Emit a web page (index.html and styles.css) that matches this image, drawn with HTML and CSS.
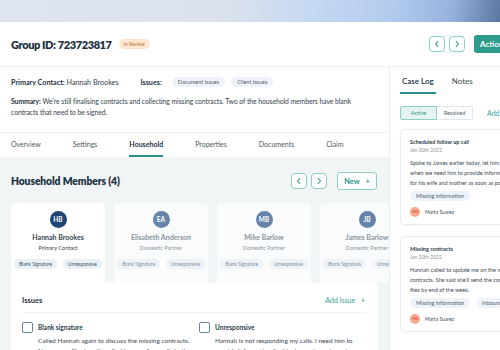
FILE: index.html
```html
<!DOCTYPE html>
<html lang="en">
<head>
  <meta charset="UTF-8">
  <title>Group 723723817 - Household</title>
  <link rel="stylesheet" href="styles.css">
</head>
<body>

  <div class="banner"></div>

  <header class="header">
    <h1>Group ID: 723723817</h1>
    <span class="status">In Review</span>
    <div class="header-actions">
      <button class="icon-btn" aria-label="Previous">
        <svg viewBox="0 0 10 10" width="8" height="8"><path d="M6 2 L3 5 L6 8" fill="none" stroke="currentColor" stroke-width="1.3" stroke-linecap="round" stroke-linejoin="round"/></svg>
      </button>
      <button class="icon-btn" aria-label="Next">
        <svg viewBox="0 0 10 10" width="8" height="8"><path d="M4 2 L7 5 L4 8" fill="none" stroke="currentColor" stroke-width="1.3" stroke-linecap="round" stroke-linejoin="round"/></svg>
      </button>
      <button class="btn-primary">Actions</button>
    </div>
  </header>

  <div class="layout">
    <main class="main">
      <section class="info">
        <div class="info-row">
          <p><strong>Primary Contact:</strong> Hannah Brookes</p>
          <p class="issues-label"><strong>Issues:</strong></p>
          <span class="chip">Document Issues</span>
          <span class="chip">Client Issues</span>
        </div>
        <p class="summary"><strong>Summary:</strong> We're still finalising contracts and collecting missing contracts. Two of the household members have blank contracts that need to be signed.</p>
      </section>

      <nav class="tabs">
        <a href="#">Overview</a>
        <a href="#">Settings</a>
        <a href="#" class="active">Household</a>
        <a href="#">Properties</a>
        <a href="#">Documents</a>
        <a href="#">Claim</a>
      </nav>

      <section class="household">
        <div class="section-head">
          <h2>Household Members (4)</h2>
          <div class="head-actions">
            <button class="icon-btn" aria-label="Previous">
              <svg viewBox="0 0 10 10" width="8" height="8"><path d="M6 2 L3 5 L6 8" fill="none" stroke="currentColor" stroke-width="1.3" stroke-linecap="round" stroke-linejoin="round"/></svg>
            </button>
            <button class="icon-btn" aria-label="Next">
              <svg viewBox="0 0 10 10" width="8" height="8"><path d="M4 2 L7 5 L4 8" fill="none" stroke="currentColor" stroke-width="1.3" stroke-linecap="round" stroke-linejoin="round"/></svg>
            </button>
            <button class="btn-outline">New <span class="plus">+</span></button>
          </div>
        </div>

        <div class="members">
          <div class="member selected">
            <span class="avatar dark">HB</span>
            <p class="member-name">Hannah Brookes</p>
            <p class="member-role">Primary Contact</p>
            <div class="member-tags"><span class="tag">Blank Signature</span><span class="tag">Unresponsive</span></div>
          </div>
          <div class="member">
            <span class="avatar">EA</span>
            <p class="member-name">Elisabeth Anderson</p>
            <p class="member-role">Domestic Partner</p>
            <div class="member-tags"><span class="tag">Blank Signature</span><span class="tag">Unresponsive</span></div>
          </div>
          <div class="member">
            <span class="avatar">MB</span>
            <p class="member-name">Mike Barlow</p>
            <p class="member-role">Domestic Partner</p>
            <div class="member-tags"><span class="tag">Blank Signature</span><span class="tag">Unresponsive</span></div>
          </div>
          <div class="member">
            <span class="avatar">JB</span>
            <p class="member-name">James Barlow</p>
            <p class="member-role">Domestic Partner</p>
            <div class="member-tags"><span class="tag">Blank Signature</span><span class="tag">Unresponsive</span></div>
          </div>
        </div>

        <div class="issues-panel">
          <div class="issues-head">
            <h3>Issues</h3>
            <a href="#" class="link">Add Issue <span class="plus">+</span></a>
          </div>
          <div class="issues-list">
            <div class="issue">
              <span class="checkbox"></span>
              <div>
                <p class="issue-title">Blank signature</p>
                <p class="issue-text">Called Hannah again to discuss the missing contracts. No answer. She hasn't replied to any of my calls in the last week.</p>
              </div>
            </div>
            <div class="issue">
              <span class="checkbox"></span>
              <div>
                <p class="issue-title">Unresponsive</p>
                <p class="issue-text">Hannah is not responding my calls. I need him to provide information for his domestic partners in order to proceed.</p>
              </div>
            </div>
          </div>
        </div>
      </section>
    </main>

    <aside class="side">
      <nav class="side-tabs">
        <a href="#" class="active">Case Log</a>
        <a href="#">Notes</a>
      </nav>
      <div class="side-toolbar">
        <div class="segmented">
          <span class="seg active">Active</span>
          <span class="seg">Resolved</span>
        </div>
        <a href="#" class="link">Add</a>
      </div>

      <div class="log">
        <p class="log-title">Scheduled follow up call</p>
        <p class="log-date">Jan 30th 2022</p>
        <p class="log-text">Spoke to James earlier today, let him know when we need him to provide information for his wife and mother as soon as possible.</p>
        <div class="log-tags"><span class="chip">Missing Information</span></div>
        <div class="log-author"><span class="avatar small">MS</span>Marta Suarez</div>
      </div>

      <div class="log">
        <p class="log-title">Missing contracts</p>
        <p class="log-date">Jan 20th 2022</p>
        <p class="log-text">Hannah called to update me on the missing contracts. She said she'll send the contract files by end of the week.</p>
        <div class="log-tags"><span class="chip">Missing Information</span><span class="chip">Inbound Call</span></div>
        <div class="log-author"><span class="avatar small">MS</span>Marta Suarez</div>
      </div>
    </aside>
  </div>

</body>
</html>
```

FILE: styles.css
```css
body {
  font-family: 'Lato', 'Open Sans', sans-serif;
  margin: 0;
  width: 500px;
  height: 350px;
  overflow: hidden;
  background-color: #fff;
  color: #2f3f4a;
}

p, h1, h2, h3 {
  margin: 0;
}

a {
  text-decoration: none;
  color: inherit;
}

button {
  font-family: inherit;
  cursor: pointer;
}

.banner {
  height: 22px;
  background: linear-gradient(100deg, #dfe5ee 0%, #dbe2ec 45%, #c6d8f1 62%, #b3cbee 78%, #97b2dc 90%, #5a779f 100%);
}

.header {
  display: flex;
  align-items: center;
  height: 44px;
  padding-left: 11px;
  border-bottom: 1px solid #eef2f3;
  white-space: nowrap;
}

.header h1 {
  font-size: 11px;
  font-weight: 800;
  letter-spacing: -0.4px;
  color: #1c3244;
}

.status {
  margin-left: 7px;
  background-color: #fde7d2;
  color: #c0763a;
  font-size: 5px;
  padding: 2px 5px;
  border-radius: 8px;
}

.header-actions {
  margin-left: auto;
  margin-right: -24px;
  display: flex;
  align-items: center;
  gap: 4px;
}

.icon-btn {
  width: 16px;
  height: 16px;
  padding: 0;
  display: flex;
  align-items: center;
  justify-content: center;
  border: 1px solid #8ccfc5;
  border-radius: 4px;
  background-color: #fff;
  color: #2b978a;
}

.btn-primary {
  margin-left: 5px;
  width: 50px;
  height: 18px;
  border: none;
  border-radius: 3px;
  background-color: #2f9b8b;
  color: #fff;
  font-size: 8px;
  font-weight: 700;
  text-align: left;
  padding: 0 0 0 6px;
}

.layout {
  display: grid;
  grid-template-columns: 390px 1fr;
}

.main {
  border-right: 1px solid #e8eeef;
}

.info {
  padding: 10px 11px 14px;
  font-size: 7.2px;
  color: #34434d;
}

.info strong {
  color: #1d3344;
  font-weight: 700;
}

.info-row {
  display: flex;
  align-items: center;
  height: 10px;
  margin-bottom: 9px;
}

.issues-label {
  margin-left: 22px;
  margin-right: 10px;
}

.chip {
  display: inline-block;
  background-color: #edf3f8;
  color: #4f6272;
  font-size: 5.5px;
  padding: 2px 6px;
  border-radius: 8px;
  margin-right: 6px;
  white-space: nowrap;
}

.summary {
  max-width: 352px;
  font-size: 6.8px;
  letter-spacing: -0.05px;
  line-height: 11px;
}

.tabs {
  display: flex;
  gap: 32px;
  padding: 0 11px;
  border-top: 1px solid #eef2f3;
  height: 24px;
  font-size: 7px;
  color: #4d5a63;
}

.tabs a {
  display: flex;
  align-items: center;
  border-bottom: 2px solid transparent;
}

.tabs a.active {
  color: #1d3344;
  font-weight: 700;
  border-bottom-color: #2b8f8a;
}

.household {
  background-color: #f2f5f6;
  padding: 15px 0 0 11px;
  height: 200px;
}

.section-head {
  display: flex;
  align-items: center;
  justify-content: space-between;
  padding-right: 12px;
  height: 18px;
}

.section-head h2 {
  font-size: 10.3px;
  font-weight: 800;
  letter-spacing: -0.1px;
  color: #1d3344;
}

.head-actions {
  display: flex;
  align-items: center;
  gap: 4px;
}

.btn-outline {
  margin-left: 6px;
  height: 18px;
  width: 40px;
  border: 1px solid #8ccfc5;
  border-radius: 3px;
  background-color: #fff;
  color: #2b978a;
  font-size: 7.5px;
  font-weight: 700;
  padding: 0;
}

.plus {
  margin-left: 4px;
  font-weight: 700;
}

.members {
  display: flex;
  gap: 9px;
  margin-top: 13px;
  overflow: hidden;
}

.member {
  flex: 0 0 94px;
  height: 80px;
  background-color: #f9fbfc;
  border-radius: 4px 4px 0 0;
  display: flex;
  flex-direction: column;
  align-items: center;
  padding-top: 8px;
  box-sizing: border-box;
  color: #8a969e;
}

.member.selected {
  background-color: #fff;
  color: #34434d;
}

.avatar {
  width: 17px;
  height: 17px;
  border-radius: 50%;
  background-color: #6684aa;
  color: #fff;
  font-size: 6.5px;
  font-weight: 700;
  display: flex;
  align-items: center;
  justify-content: center;
  flex-shrink: 0;
}

.avatar.dark {
  background-color: #1f4474;
}

.member-name {
  margin-top: 5px;
  font-size: 7px;
  font-weight: 700;
}

.member-role {
  margin-top: 4px;
  font-size: 5.5px;
}

.member-tags {
  display: flex;
  gap: 6px;
  margin-top: 8px;
}

.tag {
  background-color: #edf3f8;
  color: #7d8e9c;
  font-size: 4.8px;
  padding: 2px 5px;
  border-radius: 6px;
  white-space: nowrap;
}

.member.selected .tag {
  background-color: #e8f0f8;
  color: #3c5066;
}

.issues-panel {
  width: 367px;
  background-color: #fff;
  border-radius: 0 5px 0 0;
  padding: 0 11px;
  box-sizing: border-box;
}

.issues-head {
  display: flex;
  align-items: center;
  justify-content: space-between;
  height: 24px;
  padding-top: 5px;
  border-bottom: 1px solid #f0f3f4;
}

.issues-head h3 {
  font-size: 7.5px;
  font-weight: 700;
  color: #1d3344;
}

.link {
  color: #3aa394;
  font-size: 7px;
}

.issues-head .link {
  margin-right: 2px;
}

.issues-list {
  display: grid;
  grid-template-columns: 177px 1fr;
  padding-top: 9px;
}

.issue {
  display: flex;
  gap: 5px;
}

.checkbox {
  width: 9px;
  height: 9px;
  border: 1px solid #6c8399;
  border-radius: 2px;
  flex-shrink: 0;
}

.issue-title {
  font-size: 6.5px;
  font-weight: 700;
  color: #2b3d4a;
  line-height: 11px;
}

.issue-text {
  margin-top: 3px;
  font-size: 6.5px;
  line-height: 10px;
  color: #3c4a54;
}

.side {
  padding-left: 10px;
  overflow: hidden;
}

.side-tabs {
  display: flex;
  gap: 14px;
  height: 27px;
  font-size: 8px;
  color: #3c4a54;
}

.side-tabs a {
  display: flex;
  align-items: center;
  padding: 2px 2px 0;
  border-bottom: 2px solid transparent;
}

.side-tabs a.active {
  color: #1d3344;
  border-bottom-color: #2b8f8a;
  font-weight: 600;
}

.side-toolbar {
  display: flex;
  align-items: center;
  margin-top: 12px;
  gap: 14px;
}

.segmented {
  display: flex;
  font-size: 5.5px;
}

.seg {
  padding: 3px 0;
  width: 35px;
  text-align: center;
  border: 1px solid #e1e7ea;
  color: #56646d;
}

.seg.active {
  background-color: #e6f4f1;
  border-color: #8ccfc5;
  color: #2b978a;
  border-radius: 2px 0 0 2px;
}

.seg + .seg {
  border-left: none;
  border-radius: 0 2px 2px 0;
}

.log {
  width: 110px;
  margin-top: 9px;
  border: 1px solid #e8edef;
  border-radius: 5px;
  padding: 9px 9px 7px;
  box-sizing: border-box;
  box-shadow: 0 1px 3px rgba(0, 0, 0, 0.04);
  white-space: nowrap;
}

.log + .log {
  margin-top: 11px;
}

.log-title {
  font-size: 5.5px;
  font-weight: 700;
  color: #2b3d4a;
}

.log-date {
  margin-top: 2px;
  font-size: 5px;
  color: #8b979e;
}

.log-text {
  margin-top: 5px;
  font-size: 5.6px;
  line-height: 10px;
  color: #3c4a54;
  width: 107px;
  white-space: normal;
}

.log-tags {
  display: flex;
  margin-top: 3px;
}

.log-author {
  display: flex;
  align-items: center;
  gap: 5px;
  margin-top: 6px;
  font-size: 5px;
  color: #3c4a54;
}

.avatar.small {
  width: 10px;
  height: 10px;
  font-size: 3.5px;
  background-color: #f6a98c;
  color: #d0563a;
}
```
